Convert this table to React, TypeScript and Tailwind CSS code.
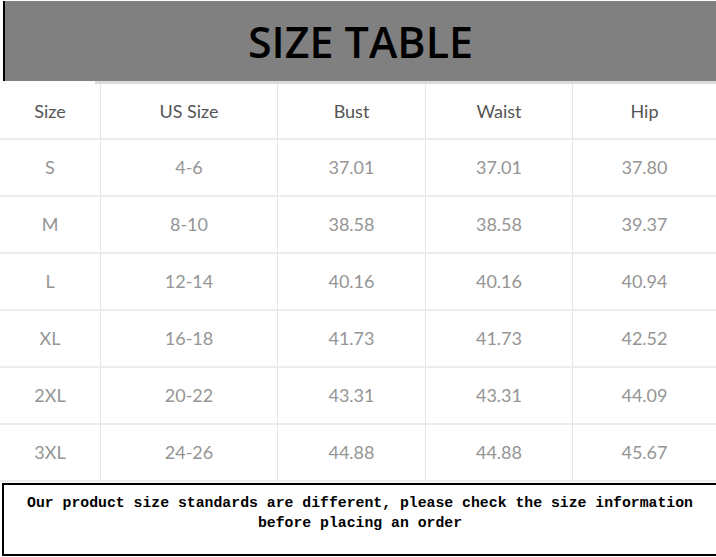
const headers = ["Size", "US Size", "Bust", "Waist", "Hip"];

const rows = [
  ["S", "4-6", "37.01", "37.01", "37.80"],
  ["M", "8-10", "38.58", "38.58", "39.37"],
  ["L", "12-14", "40.16", "40.16", "40.94"],
  ["XL", "16-18", "41.73", "41.73", "42.52"],
  ["2XL", "20-22", "43.31", "43.31", "44.09"],
  ["3XL", "24-26", "44.88", "44.88", "45.67"],
];

const cols = "grid grid-cols-[100px_177px_148px_147px_1fr]";

export default function App() {
  return (
    <div className="w-[716px] h-[557px] bg-white overflow-hidden flex flex-col">
      {/* Title bar */}
      <div className="mt-px h-[80px] ml-[3px] bg-[#808080] border-l-2 border-black flex items-center justify-center">
        <h1 className="text-[43px] font-semibold text-black font-['Open_Sans',sans-serif] mt-[2px]">
          SIZE TABLE
        </h1>
      </div>
      <div className="h-[3px] ml-[95px] bg-[#dcdcdc]" />

      {/* Table */}
      <div className="font-['Lato',sans-serif] text-[18px]">
        <div className={`${cols} h-[56px] border-b-2 border-[#ececec]`}>
          {headers.map((h, i) => (
            <div
              key={h}
              className={`flex items-center justify-center text-[#555] ${i > 0 ? "border-l border-[#e6e6e6]" : ""}`}
            >
              {h}
            </div>
          ))}
        </div>
        {rows.map((r) => (
          <div key={r[0]} className={`${cols} h-[57px] border-b-2 border-[#ececec]`}>
            {r.map((c, i) => (
              <div
                key={i}
                className={`flex items-center justify-center text-[#959595] ${i > 0 ? "border-l border-[#e6e6e6]" : ""}`}
              >
                {c}
              </div>
            ))}
          </div>
        ))}
      </div>

      {/* Note */}
      <div className="mt-px flex-1 ml-[2px] border-t-2 border-l-2 border-b-2 border-black pt-[8px] mb-[1px]">
        <p className="text-center text-[14.8px] leading-[20px] font-bold text-black font-['Liberation_Mono',monospace]">
          Our product size standards are different, please check the size information
          <br />
          before placing an order
        </p>
      </div>
    </div>
  );
}
